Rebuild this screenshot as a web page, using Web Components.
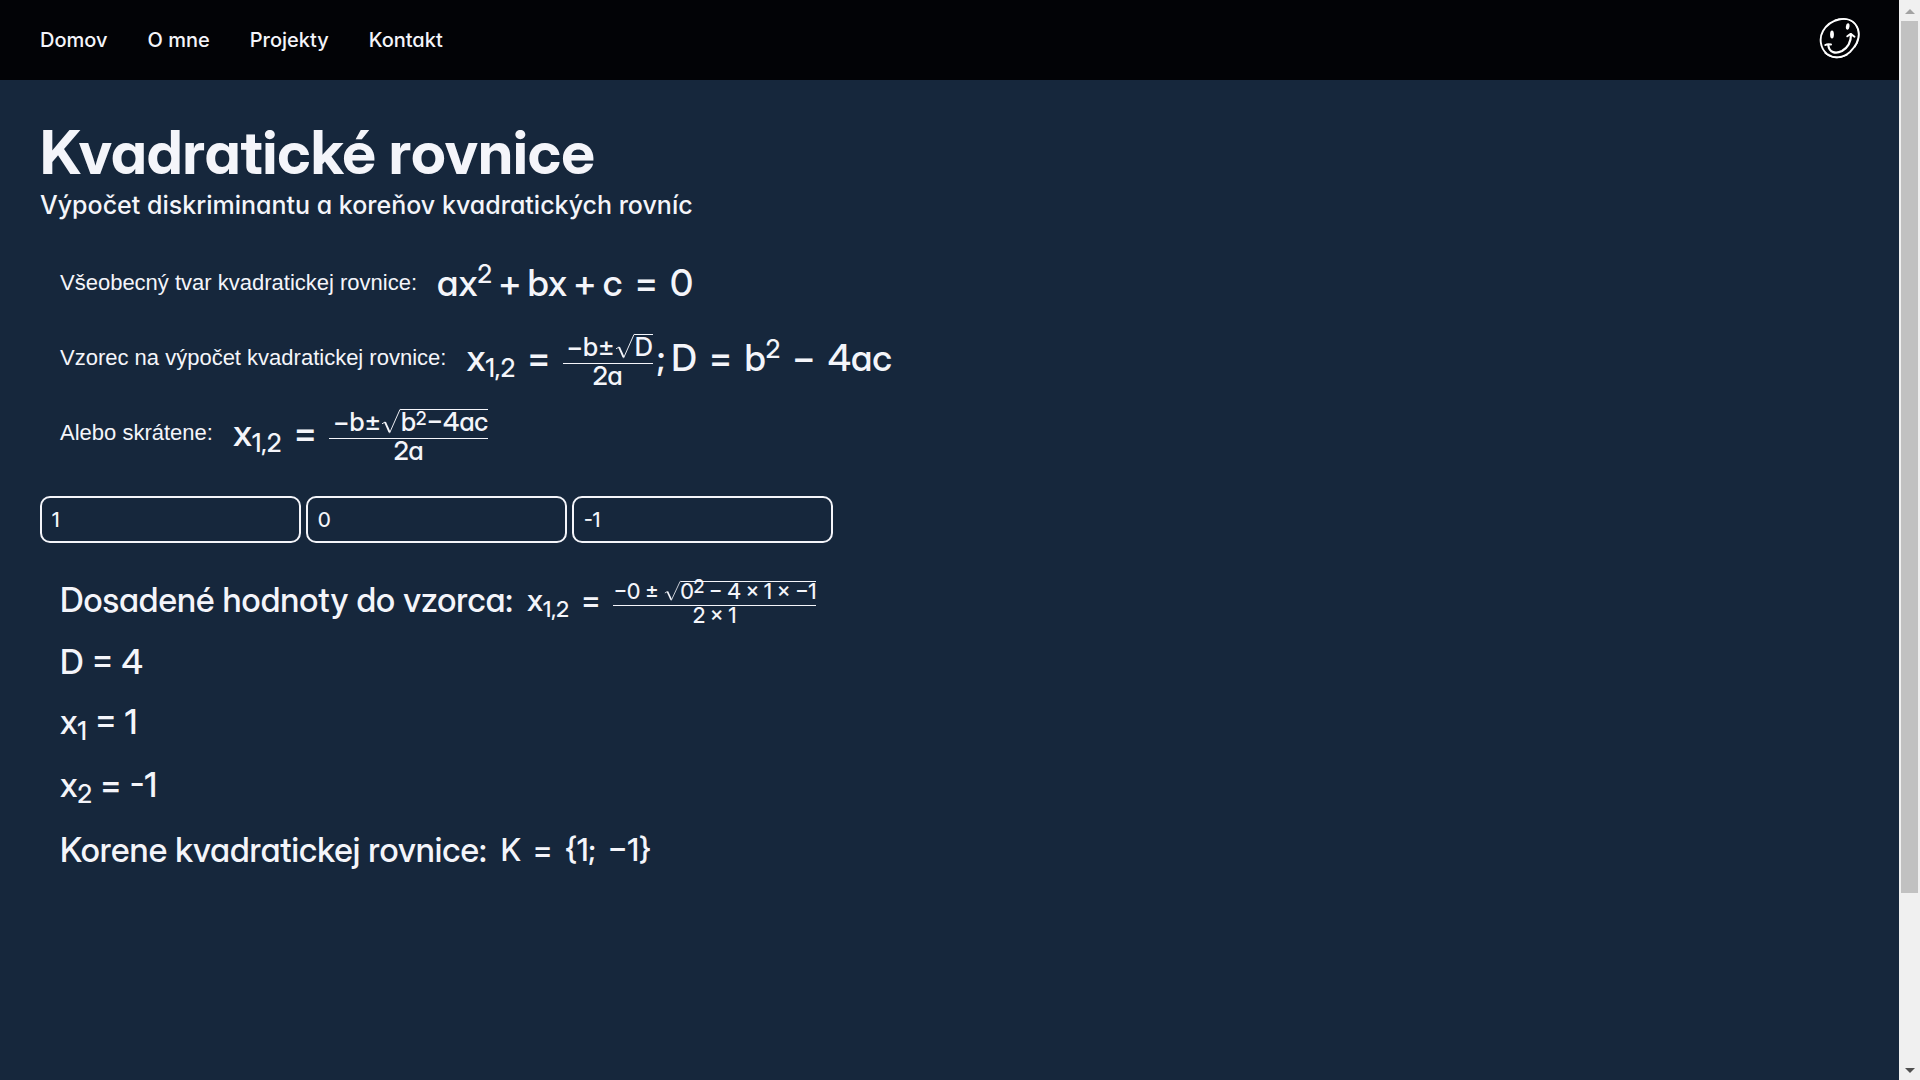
<!DOCTYPE html>
<html lang="sk">
<head>
<meta charset="utf-8">
<title>Kvadratické rovnice</title>
<style>
  html, body { margin: 0; height: 100%; }
  body {
    --ink: #f4f5fa;
    --page: #16273c;
    --bar: #020306;
    background: var(--page);
    color: var(--ink);
    font-family: Inter, "Liberation Sans", sans-serif;
    font-feature-settings: "cv11";
  }
</style>
</head>
<body>
<quad-app></quad-app>

<script>
const define = (name, html) => {
  const t = document.createElement('template');
  t.innerHTML = html;
  customElements.define(name, class extends HTMLElement {
    constructor() {
      super();
      this.attachShadow({ mode: 'open' }).append(t.content.cloneNode(true));
    }
  });
};

/* Superscript and subscript */
define('math-sup', `<style>
  :host { display: inline; font-size: 25px; line-height: 0; position: relative; top: -13px; }
  :host([small]) { font-size: 18px; top: -6px; }
</style><slot></slot>`);

define('math-sub', `<style>
  :host { display: inline; font-size: 25px; line-height: 0; position: relative; top: 6px; }
  :host([small]) { font-size: 22px; }
</style><slot></slot>`);

/* Operator with even space on both sides */
define('math-op', `<style>
  :host { display: inline-block; margin: 0 12px; line-height: 1; }
  :host([tight]) { margin: 0 6px; }
  :host([mini]) { margin: 0 3px; }
</style><slot></slot>`);

/* Fraction: slot "top" over slot "bottom" */
define('math-frac', `<style>
  :host { display: inline-flex; flex-direction: column; align-items: stretch; text-align: center;
          vertical-align: middle; margin: -12px 4px -12px 0; font-size: 26px; line-height: 24px; }
  :host([small]) { font-size: 21px; line-height: 19px; }
  .top { padding: 0 0 3px 4px; border-bottom: 1px solid var(--ink); display: flex; align-items: baseline; }
  :host([small]) .top { padding-left: 1px; }
</style><div class="top"><slot name="top"></slot></div><div><slot name="bottom"></slot></div>`);

/* Square root: radical sign with a bar over the slotted content */
define('math-root', `<style>
  :host { display: inline-flex; align-items: baseline; }
  svg { width: 20px; height: 26px; flex: none; align-self: flex-start; overflow: visible; }
  :host([small]) svg { width: 17px; height: 21px; }
  .in { border-top: 1px solid var(--ink); display: flex; align-items: baseline; }
</style>
<svg viewBox="0 0 20 28" preserveAspectRatio="none" fill="none" stroke="currentColor" aria-hidden="true">
  <path d="M1 16 L4 14" stroke-width="1"/><path d="M4 14 L8.500 25" stroke-width="2"/><path d="M8.500 26 L19 .5 H20" stroke-width="1"/>
</svg><div class="in"><slot></slot></div>`);

define('math-expr', `<style>
  :host { display: block; font-size: 37px; line-height: 40px; white-space: nowrap; }
  :host([size="m"]) { font-size: 31px; line-height: 42px; }
</style><slot></slot>`);

/* A caption followed by its formula */
define('formula-row', `<style>
  :host { display: flex; align-items: center; min-height: 75px; column-gap: 20px;
          font-family: "Liberation Sans", Arial, sans-serif; font-size: 22px; line-height: 28px; }
  ::slotted(math-expr) { font-family: "Inter Display", Inter, sans-serif; }
</style><slot></slot>`);

define('result-row', `<style>
  :host { display: flex; align-items: center; column-gap: 14px; font-size: 34px; line-height: 38px; }
  :host([sub]) { padding-bottom: 3px; }
  p { margin: 0; }
</style><p><slot></slot></p><slot name="math"></slot>`);

define('number-field', `<style>
  :host { display: block; width: 261px; }
  input { box-sizing: border-box; width: 100%; height: 47px; padding: 0 10px; margin: 0; display: block;
          border: 2px solid var(--ink); border-radius: 10px; background: transparent; color: inherit;
          font: 500 20px "Inter Display", Inter, sans-serif; outline: none; }
</style><input type="number">`);

define('smiley-logo', `<style>
  :host { display: block; width: 42px; height: 42px; }
  a { display: block; color: #fff; }
  svg { display: block; width: 100%; }
</style>
<a href="#" aria-label="Logo"><svg viewBox="0 0 42 42" fill="none" stroke="currentColor" stroke-linecap="round" stroke-linejoin="round">
  <path stroke-width="1.900" d="M20 2.500 C29 .5 36 4 39 12 C42 22 37 29 31 35 C24 41 15 42 8 37 C1 31 0 21 4 14 C8 7 13 4 20 2.500 Z"/>
  <path stroke-width="1.200" d="M16 3 C26 0 35 3 38 10 C41 17 40 25 36 30 M28 38 C20 42 12 41 6 36"/>
  <path stroke-width="2.200" d="M9.300 28 C10 36 17 37 23 34 C30 30 32 24 32 17.500"/>
  <path stroke-width="2" d="M6.300 28 C8 27 10 27 12 27.500 M28.300 19.300 L31.700 16.900 L35.500 19.700"/>
  <ellipse cx="13" cy="17.500" rx="1.900" ry="4" fill="currentColor" stroke="none"/>
  <ellipse cx="28.700" cy="9.500" rx="1.800" ry="3.200" fill="currentColor" stroke="none" transform="rotate(8 28.700 9.500)"/>
</svg></a>`);

define('site-header', `<style>
  :host { display: flex; align-items: center; justify-content: space-between; height: 80px;
          padding: 0 38px 0 40px; background: var(--bar); box-sizing: border-box; }
  nav { display: flex; gap: 40px; font-size: 20px; font-weight: 500; line-height: 24px; }
  a { color: inherit; text-decoration: none; }
  smiley-logo { margin-bottom: 4px; }
</style>
<nav><a href="#">Domov</a><a href="#">O mne</a><a href="#">Projekty</a><a href="#">Kontakt</a></nav>
<smiley-logo></smiley-logo>`);

/* Scroll track on the right edge of the window */
define('scroll-track', `<style>
  :host { display: flex; flex-direction: column; align-items: center; justify-content: space-between;
          position: sticky; top: 0; width: 21px; height: 100vh; background: #f0f0f0; }
  svg { width: 10px; height: 5px; flex: none; margin: 9px 0 7px; display: block; }
  .thumb { width: 17px; flex: 872; background: #c1c1c1; }
  .rest { flex: 166; }
</style>
<svg viewBox="0 0 10 5" aria-hidden="true"><path d="M0 5 L5 0 L10 5Z" fill="#a3a3a3"/></svg>
<div class="thumb"></div><div class="rest"></div>
<svg viewBox="0 0 10 5" aria-hidden="true"><path d="M0 0 L5 5 L10 0Z" fill="#505050"/></svg>`);

define('quad-solver', `<style>
  :host { display: block; padding: 40px; font-weight: 500; }
  h1 { margin: 0 0 2px; font: 700 60px/64px "Inter Display", Inter, sans-serif; font-feature-settings: "cv11"; }
  h2 { margin: 0; font-size: 25px; font-weight: 500; line-height: 38px; }
  .formulas { padding: 21px 20px 0; font-weight: 400; }
  math-expr { font-weight: 500; }
  .inputs { display: flex; gap: 5px; padding: 26px 0 36px; }
  .results { display: flex; flex-direction: column; gap: 22px; padding: 0 20px;
             font-family: "Inter Display", Inter, sans-serif; }
</style>
<h1>Kvadratické rovnice</h1>
<h2>Výpočet diskriminantu a koreňov kvadratických rovníc</h2>
<section class="formulas">
  <formula-row><span>Všeobecný tvar kvadratickej rovnice:</span>
    <math-expr>ax<math-sup>2</math-sup><math-op tight>+</math-op>bx<math-op tight>+</math-op>c<math-op>=</math-op>0</math-expr></formula-row>
  <formula-row><span>Vzorec na výpočet kvadratickej rovnice:</span>
    <math-expr>x<math-sub>1,2</math-sub><math-op>=</math-op><math-frac><span slot="top">−b±</span><math-root slot="top">D</math-root><span slot="bottom">2a</span></math-frac>;<math-op mini></math-op>D<math-op>=</math-op>b<math-sup>2</math-sup><math-op>−</math-op>4ac</math-expr></formula-row>
  <formula-row><span>Alebo skrátene:</span>
    <math-expr>x<math-sub>1,2</math-sub><math-op>=</math-op><math-frac><span slot="top">−b±</span><math-root slot="top">b<math-sup small>2</math-sup>−4ac</math-root><span slot="bottom">2a</span></math-frac></math-expr></formula-row>
</section>
<form class="inputs">
  <number-field value="1" label="a"></number-field>
  <number-field value="0" label="b"></number-field>
  <number-field value="-1" label="c"></number-field>
</form>
<section class="results">
  <result-row>Dosadené hodnoty do vzorca:
    <math-expr slot="math" size="m">x<math-sub small>1,2</math-sub><math-op>=</math-op><math-frac small><span slot="top">−0 ±&nbsp;</span><math-root small slot="top">0<math-sup small>2</math-sup>&nbsp;− 4 × 1 × −1</math-root><span slot="bottom">2 × 1</span></math-frac></math-expr></result-row>
  <result-row>D = 4</result-row>
  <result-row sub>x<math-sub>1</math-sub> = 1</result-row>
  <result-row sub>x<math-sub>2</math-sub> = -1</result-row>
  <result-row>Korene kvadratickej rovnice:
    <math-expr slot="math" size="m">K<math-op>=</math-op>{1;<math-op tight></math-op>−1}</math-expr></result-row>
</section>`);

define('quad-app', `<style>
  :host { display: grid; grid-template-columns: minmax(0, 1fr) 21px; align-items: start; }
</style>
<main><site-header></site-header><quad-solver></quad-solver></main>
<scroll-track></scroll-track>`);

/* Copy each field's value and label onto its input */
const solver = document.querySelector('quad-app').shadowRoot.querySelector('quad-solver').shadowRoot;
for (const field of solver.querySelectorAll('number-field')) {
  const input = field.shadowRoot.querySelector('input');
  input.value = field.getAttribute('value');
  input.setAttribute('aria-label', field.getAttribute('label'));
}
</script>
</body>
</html>
